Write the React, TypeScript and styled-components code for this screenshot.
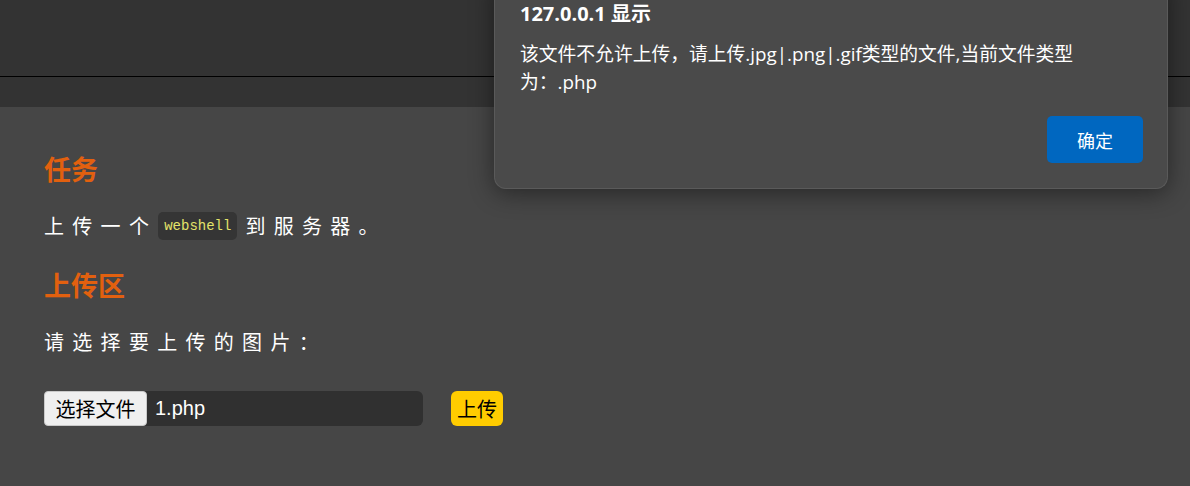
import React from "react";
import styled, { createGlobalStyle } from "styled-components";

const Global = createGlobalStyle`
  html, body { margin: 0; padding: 0; }
  body {
    background: #464646;
    font-family: "Liberation Sans", "Noto Sans CJK SC", sans-serif;
    color: #ffffff;
    overflow: hidden;
  }
`;

const Page = styled.div`
  position: relative;
  width: 1190px;
  height: 486px;
  background: #464646;
  overflow: hidden;
`;

const TopBar = styled.header`
  height: 76px;
  background: #333333;
  border-bottom: 1px solid #000000;
`;

const NavBar = styled.nav`
  height: 30px;
  background: #333333;
`;

const Main = styled.main`
  display: flex;
  flex-direction: column;
  align-items: flex-start;
  padding: 44px 44px 0;
`;

const Heading = styled.h2<{ $gap?: number }>`
  margin: ${(p) => p.$gap ?? 0}px 0 0;
  font-size: 27px;
  line-height: 36px;
  font-weight: 700;
  color: #e2600f;
  font-family: "Noto Sans CJK SC", sans-serif;
`;

const Para = styled.p`
  margin: 21px 0 0;
  font-size: 20px;
  line-height: 36px;
  letter-spacing: 8.3px;
  font-family: "Noto Sans CJK SC", sans-serif;
  display: flex;
  align-items: center;
`;

const Code = styled.code`
  display: inline-flex;
  align-items: center;
  height: 28px;
  padding: 0 6px;
  margin: 0 8px 0 1px;
  border-radius: 5px;
  background: #353535;
  color: #e3e36a;
  font-family: "Liberation Mono", monospace;
  font-size: 14px;
  letter-spacing: 0;
`;

const UploadRow = styled.form`
  display: flex;
  align-items: center;
  margin-top: 31px;
  gap: 28px;
`;

const FileField = styled.div`
  display: flex;
  align-items: stretch;
  width: 379px;
  height: 35px;
  background: #303030;
  border-radius: 6px;
`;

const ChooseButton = styled.span`
  display: flex;
  align-items: center;
  justify-content: center;
  width: 101px;
  background: #efefef;
  border: 1px solid #c9c9c9;
  border-radius: 4px;
  color: #000000;
  font-size: 20px;
  font-family: "Noto Sans CJK SC", sans-serif;
`;

const FileName = styled.span`
  display: flex;
  align-items: center;
  padding-left: 8px;
  font-size: 20px;
  color: #ffffff;
`;

const SubmitButton = styled.button`
  height: 35px;
  padding: 0 6px;
  border: none;
  border-radius: 6px;
  background: #ffcc00;
  color: #000000;
  font-size: 20px;
  font-family: "Noto Sans CJK SC", sans-serif;
`;

const Dialog = styled.div`
  position: absolute;
  left: 494px;
  top: -20px;
  width: 674px;
  box-sizing: border-box;
  padding: 20px 24px 25px 25px;
  background: #4a4a4a;
  border: 1px solid #5a5a5a;
  border-top: none;
  border-radius: 0 0 12px 12px;
  box-shadow: 0 4px 24px rgba(0, 0, 0, 0.45);
  display: flex;
  flex-direction: column;
`;

const DialogTitle = styled.div`
  font-size: 20px;
  line-height: 27px;
  font-weight: 700;
  font-family: "Open Sans", "Noto Sans CJK SC", sans-serif;
`;

const DialogMessage = styled.div`
  margin-top: 13px;
  font-size: 18.8px;
  line-height: 28px;
  font-family: "Open Sans", "Noto Sans CJK SC", sans-serif;
  white-space: pre-line;
`;

const DialogActions = styled.div`
  display: flex;
  justify-content: flex-end;
  margin-top: 20px;
`;

const OkButton = styled.button`
  width: 96px;
  height: 47px;
  border: none;
  border-radius: 5px;
  background: #0067c0;
  color: #ffffff;
  font-size: 18px;
  font-family: "Noto Sans CJK SC", sans-serif;
`;

export default function App() {
  return (
    <Page>
      <Global />
      <TopBar />
      <NavBar />
      <Main>
        <Heading>任务</Heading>
        <Para>
          上传一个<Code>webshell</Code>到服务器。
        </Para>
        <Heading $gap={23}>上传区</Heading>
        <Para>请选择要上传的图片：</Para>
        <UploadRow>
          <FileField>
            <ChooseButton>选择文件</ChooseButton>
            <FileName>1.php</FileName>
          </FileField>
          <SubmitButton type="button">上传</SubmitButton>
        </UploadRow>
      </Main>
      <Dialog>
        <DialogTitle>127.0.0.1 显示</DialogTitle>
        <DialogMessage>
          {"该文件不允许上传，请上传.jpg|.png|.gif类型的文件,当前文件类型\n为：.php"}
        </DialogMessage>
        <DialogActions>
          <OkButton type="button">确定</OkButton>
        </DialogActions>
      </Dialog>
    </Page>
  );
}
